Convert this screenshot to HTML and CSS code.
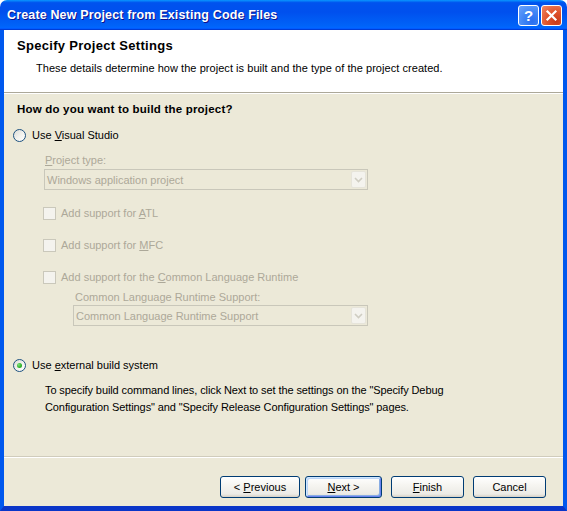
FILE: index.html
```html
<!DOCTYPE html>
<html>
<head>
<meta charset="utf-8">
<link rel="stylesheet" href="styles.css">
</head>
<body>
<div class="window">
  <div class="titlebar">
    <span class="title">Create New Project from Existing Code Files</span>
    <div class="tb-buttons">
      <span class="tb-btn help">?</span>
      <span class="tb-btn close"><svg width="13" height="13" viewBox="0 0 13 13"><path d="M2.5 2.5 L10.5 10.5 M10.5 2.5 L2.5 10.5" stroke="#fff" stroke-width="2.2" stroke-linecap="square"/></svg></span>
    </div>
  </div>
  <div class="frame">
    <div class="header">
      <div class="h-title">Specify Project Settings</div>
      <div class="h-sub">These details determine how the project is built and the type of the project created.</div>
    </div>
    <div class="sep"></div>
    <div class="content">
      <div class="question">How do you want to build the project?</div>
      <div class="radio-row first">
        <span class="radio"></span><span>Use <u>V</u>isual Studio</span>
      </div>
      <div class="label l1 disabled"><u>P</u>roject type:</div>
      <div class="combo c1">
        <span class="combo-text">Windows application project</span>
        <span class="combo-btn"><svg width="9" height="6" viewBox="0 0 9 6"><path d="M1 1 L4.5 4.5 L8 1" fill="none" stroke="#CFCDC2" stroke-width="1.6"/></svg></span>
      </div>
      <div class="check-row atl disabled"><span class="check"></span><span>Add support for <u>A</u>TL</span></div>
      <div class="check-row mfc disabled"><span class="check"></span><span>Add support for <u>M</u>FC</span></div>
      <div class="check-row clr disabled"><span class="check"></span><span>Add support for the <u>C</u>ommon Language Runtime</span></div>
      <div class="label l2 disabled">Common Language Runtime Support:</div>
      <div class="combo c2">
        <span class="combo-text">Common Language Runtime Support</span>
        <span class="combo-btn"><svg width="9" height="6" viewBox="0 0 9 6"><path d="M1 1 L4.5 4.5 L8 1" fill="none" stroke="#CFCDC2" stroke-width="1.6"/></svg></span>
      </div>
      <div class="radio-row second">
        <span class="radio checked"></span><span>Use <u>e</u>xternal build system</span>
      </div>
      <p class="para">To specify build command lines, click Next to set the settings on the "Specify Debug<br>Configuration Settings" and "Specify Release Configuration Settings" pages.</p>
    </div>
    <div class="sep2"></div>
    <div class="footer">
      <button class="btn b-prev">&lt; <u>P</u>revious</button>
      <button class="btn b-next default"><u>N</u>ext &gt;</button>
      <button class="btn b-finish"><u>F</u>inish</button>
      <button class="btn b-cancel">Cancel</button>
    </div>
  </div>
</div>
</body>
</html>
```

FILE: styles.css
```css
html, body {
  margin: 0;
  padding: 0;
  background: #fff;
}
body {
  font-family: "Liberation Sans", Arial, sans-serif;
  font-size: 11px;
  color: #000;
}
u { text-decoration: underline; text-underline-offset: 1px; }

.window {
  width: 567px;
  height: 511px;
  display: flex;
  flex-direction: column;
}

.titlebar {
  height: 30px;
  flex: none;
  box-sizing: border-box;
  display: flex;
  align-items: center;
  justify-content: space-between;
  padding: 0 5px 0 7px;
  border-radius: 7px 7px 0 0;
  background: linear-gradient(180deg, #0997ff 0%, #0053ee 9%, #0050ee 40%, #0063f8 85%, #0066ff 92%, #005bff 95%, #003dd7 97%, #003dd7 100%);
}
.title {
  color: #fff;
  font-weight: bold;
  font-size: 12.5px;
  letter-spacing: 0.15px;
  text-shadow: 1px 1px 0 #0f1089;
}
.tb-buttons {
  display: flex;
  gap: 2px;
  margin-top: 1px;
}
.tb-btn {
  width: 21px;
  height: 21px;
  box-sizing: border-box;
  border: 1px solid #fff;
  border-radius: 3px;
  display: flex;
  align-items: center;
  justify-content: center;
}
.help {
  background: radial-gradient(circle at 70% 80%, #2a6ef0 0%, #3c82f5 40%, #6aa3fb 100%);
  color: #fff;
  font-weight: bold;
  font-size: 15px;
  font-family: "Liberation Sans", Arial, sans-serif;
}
.close {
  background: radial-gradient(circle at 75% 80%, #c83a1a 0%, #e0532c 45%, #f08865 100%);
}

.frame {
  flex: 1;
  display: flex;
  flex-direction: column;
  background: #ece9d8;
  border-left: 4px solid #0058ee;
  border-right: 4px solid #0058ee;
  border-bottom: 5px solid #0a35c8;
  min-height: 0;
}

.header {
  background: #fff;
  height: 62px;
  box-sizing: border-box;
  padding: 8px 0 0 13px;
  flex: none;
}
.h-title {
  font-size: 13px;
  font-weight: bold;
  letter-spacing: 0.3px;
  line-height: 16px;
}
.h-sub {
  margin: 7px 0 0 19px;
  line-height: 14px;
  letter-spacing: 0.05px;
}
.sep {
  flex: none;
  height: 1px;
  background: #aca899;
  border-bottom: 1px solid #fff;
}

.content {
  flex: 1;
  display: flex;
  flex-direction: column;
  align-items: flex-start;
}
.question {
  font-weight: bold;
  font-size: 11.5px;
  letter-spacing: 0.2px;
  line-height: 14px;
  margin: 8px 0 0 13px;
}
.radio-row {
  display: flex;
  align-items: center;
  height: 14px;
  line-height: 14px;
  gap: 6px;
  margin-left: 9px;
}
.radio-row.first { margin-top: 12px; }
.radio-row.second { margin-top: 32px; }
.radio {
  width: 13px;
  height: 13px;
  box-sizing: border-box;
  border: 1px solid #1c5180;
  border-radius: 50%;
  background: linear-gradient(135deg, #dcdcd7 0%, #f3f3ef 55%, #ffffff 100%);
  display: flex;
  align-items: center;
  justify-content: center;
}
.radio.checked::after {
  content: "";
  width: 5px;
  height: 5px;
  border-radius: 50%;
  background: radial-gradient(circle at 35% 35%, #7fe37b 0%, #31b32d 55%, #1f9a1d 100%);
}

.disabled { color: #aca899; }
.label {
  line-height: 14px;
}
.label.l1 { margin: 11px 0 0 41px; }
.label.l2 { margin: 6px 0 0 71px; }

.combo {
  height: 21px;
  box-sizing: border-box;
  border: 1px solid #c9c7ba;
  display: flex;
  align-items: center;
  color: #aca899;
}
.combo.c1 { width: 324px; margin: 2px 0 0 40px; }
.combo.c2 { width: 295px; margin: 1px 0 0 69px; }
.combo-text {
  flex: 1;
  padding-left: 2px;
}
.combo-btn {
  width: 15px;
  height: 17px;
  box-sizing: border-box;
  margin-right: 1px;
  border: 1px solid #e6e4da;
  border-radius: 2px;
  background: #f4f3ee;
  display: flex;
  align-items: center;
  justify-content: center;
}

.check-row {
  display: flex;
  align-items: center;
  height: 14px;
  line-height: 14px;
  gap: 5px;
  margin-left: 39px;
}
.check-row.atl { margin-top: 16px; }
.check-row.mfc { margin-top: 18px; }
.check-row.clr { margin-top: 18px; }
.check {
  width: 13px;
  height: 13px;
  box-sizing: border-box;
  border: 1px solid #cac8bb;
  background: #f4f3ee;
}

.para {
  margin: 10px 0 0 41px;
  line-height: 17px;
  letter-spacing: -0.1px;
}

.sep2 {
  flex: none;
  height: 1px;
  background: #d0ccbc;
  border-bottom: 1px solid #fff;
}
.footer {
  flex: none;
  height: 48px;
  box-sizing: border-box;
  padding-top: 18px;
  display: flex;
  align-items: flex-start;
}
.btn {
  height: 22px;
  box-sizing: border-box;
  border: 1px solid #003c74;
  border-radius: 3px;
  background: linear-gradient(180deg, #ffffff 0%, #f6f5f1 40%, #ecebe6 85%, #d6d0c5 100%);
  font-family: "Liberation Sans", Arial, sans-serif;
  font-size: 11px;
  color: #000;
  padding: 0;
  line-height: 20px;
}
.btn.default {
  box-shadow: inset 1px 1px 0 #cee7ff, inset -1px -1px 0 #6982ee, inset 2px 2px 0 #bcd4f6, inset -2px -2px 0 #89ade4;
}
.b-prev { width: 80px; margin-left: 216px; }
.b-next { width: 77px; margin-left: 5px; }
.b-finish { width: 73px; margin-left: 9px; }
.b-cancel { width: 73px; margin-left: 9px; }
```
